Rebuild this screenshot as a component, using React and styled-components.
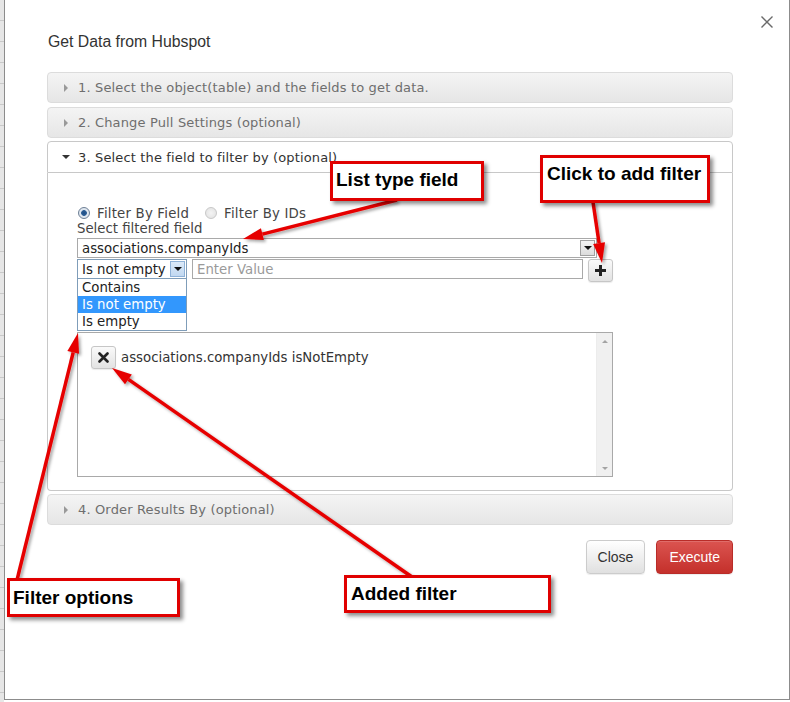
import React from "react";
import styled, { createGlobalStyle } from "styled-components";

const Global = createGlobalStyle`
  html, body { margin: 0; padding: 0; }
  body {
    width: 790px;
    height: 702px;
    overflow: hidden;
    background-color: #ffffff;
    background-image:
      repeating-linear-gradient(to bottom, #e6e6e6 0, #e6e6e6 20px, #c9c9c9 20px, #c9c9c9 21px);
    background-size: 4px 702px;
    background-repeat: no-repeat;
    font-family: "DejaVu Sans", Verdana, sans-serif;
  }
`;

const Page = styled.div`
  position: relative;
  width: 790px;
  height: 702px;
  display: flex;
  align-items: flex-start;
`;

const Dialog = styled.div`
  margin-left: 4px;
  width: 786px;
  height: 700px;
  background: #fff;
  border: 1px solid #8c8c8c;
  border-top: none;
  padding: 32px 56px 0 42px;
  box-sizing: border-box;
  display: flex;
  flex-direction: column;
  position: relative;
`;

const CloseX = styled.button`
  position: absolute;
  top: 15px;
  right: 15px;
  width: 14px;
  height: 14px;
  padding: 0;
  border: none;
  background: none;
  display: flex;
`;

const Title = styled.h4`
  margin: 0 0 20px 1px;
  font-family: "Liberation Sans", Arial, sans-serif;
  font-weight: normal;
  font-size: 15.8px;
  line-height: 20px;
  color: #333;
`;

const Accordion = styled.div`
  display: flex;
  flex-direction: column;
`;

const Header = styled.div`
  height: ${(p) => (p.$open ? "32px" : "31px")};
  box-sizing: border-box;
  margin-top: ${(p) => p.$mt || 0}px;
  border: 1px solid ${(p) => (p.$open ? "#c8c8c8" : "#dcdcdc")};
  border-radius: ${(p) => (p.$open ? "4px 4px 0 0" : "4px")};
  background: ${(p) =>
    p.$open ? "#fff" : "linear-gradient(to bottom, #f4f4f4 0%, #ededed 50%, #e6e6e6 100%)"};
  display: flex;
  align-items: center;
  padding-left: 14px;
  gap: 8px;
  font-size: 13px;
  letter-spacing: 0.15px;
  color: ${(p) => (p.$open ? "#333" : "#6e6e6e")};
`;

const Caret = styled.span`
  width: 0;
  height: 0;
  ${(p) =>
    p.$open
      ? `border-left: 4px solid transparent; border-right: 4px solid transparent; border-top: 4px solid #333; margin-right: 0;`
      : `border-top: 4px solid transparent; border-bottom: 4px solid transparent; border-left: 4px solid #999; margin-left: 2px; margin-right: 2px;`}
`;

const Panel = styled.div`
  border: 1px solid #c8c8c8;
  border-top: none;
  border-radius: 0 0 4px 4px;
  padding: 32px 0 13px 29px;
  display: flex;
  flex-direction: column;
  font-size: 13.3px;
  color: #333;
`;

const Form = styled.div`
  width: 536px;
  display: flex;
  flex-direction: column;
  position: relative;
`;

const RadioRow = styled.div`
  display: flex;
  align-items: center;
  height: 16px;
  padding-left: 1px;
`;

const RadioLabel = styled.label`
  display: flex;
  align-items: center;
  gap: 7px;
  margin-right: 16px;
  color: #444;
  letter-spacing: 0.2px;
`;

const Radio = styled.span`
  width: 12px;
  height: 12px;
  border-radius: 50%;
  box-sizing: border-box;
  border: 1px solid ${(p) => (p.$checked ? "#6d7f95" : "#c8c8c8")};
  background: ${(p) =>
    p.$checked
      ? "radial-gradient(circle, #1f4e86 0, #2b5d95 2.5px, #dfe7f0 3.2px)"
      : "radial-gradient(circle, #f4f4f4 0, #e0e0e0 100%)"};
`;

const FieldLabel = styled.div`
  height: 16px;
  line-height: 16px;
  color: #444;
`;

const SelectBox = styled.div`
  width: ${(p) => p.$w}px;
  height: 20px;
  box-sizing: border-box;
  border: 1px solid ${(p) => (p.$blue ? "#7f9db9" : "#a9a9a9")};
  display: flex;
  align-items: center;
  justify-content: space-between;
  padding-left: 4px;
  padding-right: 1px;
  color: #222;
  background: #fff;
  margin-top: ${(p) => p.$mt || 0}px;
  white-space: nowrap;
`;

const DropBtn = styled.span`
  width: 15px;
  height: 16px;
  box-sizing: border-box;
  flex-shrink: 0;
  border: 1px solid ${(p) => (p.$blue ? "#8fb2d8" : "#a0a0a0")};
  background: ${(p) =>
    p.$blue ? "linear-gradient(#dbe9f8, #c1d8f1)" : "linear-gradient(#f3f3f3, #dcdcdc)"};
  display: flex;
  align-items: center;
  justify-content: center;
  &::after {
    content: "";
    border-left: 4px solid transparent;
    border-right: 4px solid transparent;
    border-top: 4px solid #111;
  }
`;

const FilterRow = styled.div`
  display: flex;
  align-items: flex-start;
  margin-top: 1px;
  position: relative;
`;

const ValueInput = styled.div`
  width: 391px;
  height: 20px;
  box-sizing: border-box;
  border: 1px solid #a9a9a9;
  margin-left: 5px;
  padding-left: 4px;
  display: flex;
  align-items: center;
  color: #9a9a9a;
`;

const IconBtn = styled.span`
  width: ${(p) => p.$w}px;
  height: 23px;
  box-sizing: border-box;
  margin-left: ${(p) => p.$ml || 0}px;
  border: 1px solid #c6c6c6;
  border-radius: 3px;
  background: linear-gradient(#fafafa, #e2e2e2);
  box-shadow: 0 1px 1px rgba(0, 0, 0, 0.08);
  display: flex;
  align-items: center;
  justify-content: center;
  flex-shrink: 0;
`;

const DropList = styled.ul`
  position: absolute;
  left: 0;
  top: 20px;
  width: 110px;
  margin: 0;
  padding: 0;
  list-style: none;
  box-sizing: border-box;
  border: 1px solid #7f9db9;
  border-top: none;
  background: #fff;
`;

const DropItem = styled.li`
  height: 17px;
  line-height: 17px;
  padding-left: 4px;
  white-space: nowrap;
  background: ${(p) => (p.$active ? "#3297fd" : "#fff")};
  color: ${(p) => (p.$active ? "#fff" : "#222")};
`;

const ListBox = styled.div`
  margin-top: 50px;
  height: 145px;
  box-sizing: border-box;
  border: 1px solid #a9a9a9;
  display: flex;
`;

const ListItems = styled.div`
  flex: 1;
  padding: 13px 0 0 13px;
`;

const Chip = styled.div`
  display: flex;
  align-items: center;
  gap: 5px;
  color: #333;
`;

const ScrollBar = styled.div`
  width: 16px;
  background: #f0f0f0;
  border-left: 1px solid #ececec;
  display: flex;
  flex-direction: column;
  justify-content: space-between;
  align-items: center;
  padding: 7px 0 6px;
  box-sizing: border-box;
`;

const ScrollArrow = styled.span`
  width: 0;
  height: 0;
  border-left: 3px solid transparent;
  border-right: 3px solid transparent;
  ${(p) => (p.$up ? "border-bottom: 3px solid #a3a3a3;" : "border-top: 3px solid #a3a3a3;")}
`;

const Footer = styled.div`
  display: flex;
  justify-content: flex-end;
  gap: 11px;
  margin-top: 15px;
`;

const Button = styled.button`
  height: 34px;
  padding: 0 ${(p) => p.$px}px;
  border-radius: 4px;
  font-family: "Liberation Sans", Arial, sans-serif;
  font-size: 14px;
  border: 1px solid ${(p) => (p.$primary ? "#b92c28" : "#cccccc")};
  color: ${(p) => (p.$primary ? "#fff" : "#333")};
  background: ${(p) =>
    p.$primary
      ? "linear-gradient(to bottom, #db5450 0%, #c4302b 100%)"
      : "linear-gradient(to bottom, #ffffff 0%, #e0e0e0 100%)"};
  box-shadow: inset 0 1px 0 rgba(255, 255, 255, 0.15), 0 1px 1px rgba(0, 0, 0, 0.075);
`;

const Callout = styled.div`
  position: absolute;
  left: ${(p) => p.$x}px;
  top: ${(p) => p.$y}px;
  width: ${(p) => p.$w}px;
  height: ${(p) => p.$h}px;
  box-sizing: border-box;
  border: 3px solid #e00000;
  background: #fff;
  box-shadow: 3px 3px 4px rgba(0, 0, 0, 0.45);
  font-family: "Liberation Sans", Arial, sans-serif;
  font-weight: bold;
  font-size: 19px;
  color: #000;
  padding: ${(p) => p.$pt || 6}px 0 0 ${(p) => p.$pl || 4}px;
  line-height: 22px;
  white-space: nowrap;
`;

const ArrowLayer = styled.svg`
  position: absolute;
  left: 0;
  top: 0;
  pointer-events: none;
  overflow: visible;
`;

function Arrow({ x1, y1, x2, y2 }) {
  const dx = x2 - x1;
  const dy = y2 - y1;
  const len = Math.hypot(dx, dy);
  const ux = dx / len;
  const uy = dy / len;
  const hl = 20;
  const hw = 6;
  const bx = x2 - ux * hl;
  const by = y2 - uy * hl;
  const px = -uy * hw;
  const py = ux * hw;
  return (
    <g>
      <line x1={x1} y1={y1} x2={bx} y2={by} stroke="#e60000" strokeWidth="3.5" />
      <polygon points={`${x2},${y2} ${bx + px},${by + py} ${bx - px},${by - py}`} fill="#e60000" />
    </g>
  );
}

export default function App() {
  return (
    <>
      <Global />
      <Page>
        <Dialog>
          <CloseX aria-label="close">
            <svg width="14" height="14" viewBox="0 0 14 14">
              <path d="M1.5 1.5 L12.5 12.5 M12.5 1.5 L1.5 12.5" stroke="#6a6a6a" strokeWidth="1.4" />
            </svg>
          </CloseX>
          <Title>Get Data from Hubspot</Title>
          <Accordion>
            <Header>
              <Caret />
              1. Select the object(table) and the fields to get data.
            </Header>
            <Header $mt={4}>
              <Caret />
              2. Change Pull Settings (optional)
            </Header>
            <Header $open $mt={3}>
              <Caret $open />
              3. Select the field to filter by (optional)
            </Header>
            <Panel>
              <Form>
                <RadioRow>
                  <RadioLabel>
                    <Radio $checked />
                    Filter By Field
                  </RadioLabel>
                  <RadioLabel>
                    <Radio />
                    Filter By IDs
                  </RadioLabel>
                </RadioRow>
                <FieldLabel>Select filtered field</FieldLabel>
                <SelectBox $w={520} $mt={1}>
                  associations.companyIds
                  <DropBtn />
                </SelectBox>
                <FilterRow>
                  <SelectBox $w={110} $blue>
                    Is not empty
                    <DropBtn $blue />
                  </SelectBox>
                  <ValueInput>Enter Value</ValueInput>
                  <IconBtn $w={25} $ml={5}>
                    <svg width="13" height="13" viewBox="0 0 13 13">
                      <path d="M6.5 1 V12 M1 6.5 H12" stroke="#222" strokeWidth="3" />
                    </svg>
                  </IconBtn>
                  <DropList>
                    <DropItem>Contains</DropItem>
                    <DropItem $active>Is not empty</DropItem>
                    <DropItem>Is empty</DropItem>
                  </DropList>
                </FilterRow>
                <ListBox>
                  <ListItems>
                    <Chip>
                      <IconBtn $w={25}>
                        <svg width="11" height="11" viewBox="0 0 11 11">
                          <path d="M1.5 1.5 L9.5 9.5 M9.5 1.5 L1.5 9.5" stroke="#222" strokeWidth="2.6" strokeLinecap="round" />
                        </svg>
                      </IconBtn>
                      associations.companyIds isNotEmpty
                    </Chip>
                  </ListItems>
                  <ScrollBar>
                    <ScrollArrow $up />
                    <ScrollArrow />
                  </ScrollBar>
                </ListBox>
              </Form>
            </Panel>
            <Header $mt={3}>
              <Caret />
              4. Order Results By (optional)
            </Header>
          </Accordion>
          <Footer>
            <Button $px={11}>Close</Button>
            <Button $primary $px={12}>Execute</Button>
          </Footer>
        </Dialog>

        <ArrowLayer width="790" height="702" viewBox="0 0 790 702">
          <defs>
            <filter id="sh" x="-10%" y="-10%" width="130%" height="130%">
              <feDropShadow dx="2" dy="2" stdDeviation="1.5" floodColor="#000" floodOpacity="0.35" />
            </filter>
          </defs>
          <g filter="url(#sh)">
            <Arrow x1={397} y1={200} x2={243} y2={239} />
            <Arrow x1={593} y1={202} x2={602} y2={263} />
            <Arrow x1={17} y1={580} x2={78} y2={333} />
            <Arrow x1={412} y1={577} x2={112} y2={368} />
          </g>
        </ArrowLayer>

        <Callout $x={330} $y={161} $w={154} $h={40} $pt={5} $pl={3}>List type field</Callout>
        <Callout $x={540} $y={155} $w={170} $h={48} $pt={5} $pl={4}>Click to add filter</Callout>
        <Callout $x={7} $y={578} $w={173} $h={39} $pt={6} $pl={3}>Filter options</Callout>
        <Callout $x={344} $y={575} $w={207} $h={38} $pt={5} $pl={4}>Added filter</Callout>
      </Page>
    </>
  );
}
